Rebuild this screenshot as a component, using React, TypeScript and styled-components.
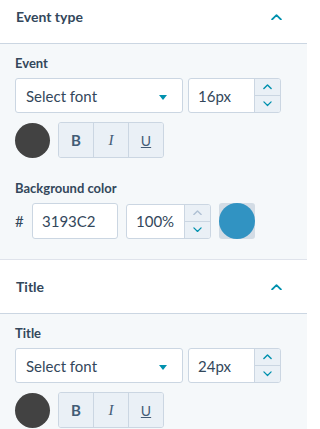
import React from "react";
import styled, { createGlobalStyle } from "styled-components";

const Global = createGlobalStyle`
  html, body { margin: 0; padding: 0; background: #ffffff; }
  body { font-family: Lato, "Open Sans", sans-serif; color: #33475b; }
`;

const Panel = styled.div`
  width: 307px;
  display: flex;
  flex-direction: column;
`;

const Header = styled.div<{ $h: number }>`
  box-sizing: border-box;
  height: ${(p) => p.$h}px;
  display: flex;
  align-items: flex-end;
  justify-content: space-between;
  padding: 0 25px 17px 16px;
  background: #fff;
  border-bottom: 1px solid #cbd6e2;
  font-size: 14px;
  font-weight: 700;
  line-height: 18px;
  color: #33475b;
`;

const HeaderIcon = styled.span`
  display: flex;
  align-items: center;
  height: 18px;
`;

const Body = styled.div`
  background: #f5f8fa;
  padding: 11px 15px 20px;
  display: flex;
  flex-direction: column;
  border-bottom: 1px solid #dfe3eb;
`;

const Label = styled.div<{ $top?: number }>`
  font-size: 13px;
  font-weight: 700;
  color: #33475b;
  margin-top: ${(p) => p.$top ?? 0}px;
  margin-bottom: 7px;
  line-height: 16px;
`;

const Row = styled.div<{ $gap?: number; $top?: number }>`
  display: flex;
  align-items: center;
  gap: ${(p) => p.$gap ?? 5}px;
  margin-top: ${(p) => p.$top ?? 0}px;
`;

const Select = styled.div`
  box-sizing: border-box;
  width: 168px;
  height: 35px;
  background: #fff;
  border: 1px solid #cbd6e2;
  border-radius: 3px;
  display: flex;
  align-items: center;
  justify-content: space-between;
  padding: 0 15px 0 10px;
  font-size: 15px;
  color: #33475b;
`;

const Caret = styled.span`
  width: 0;
  height: 0;
  border-left: 4.5px solid transparent;
  border-right: 4.5px solid transparent;
  border-top: 5px solid #0091ae;
  margin-top: 3px;
`;

const NumberBox = styled.div<{ $w: number }>`
  box-sizing: border-box;
  width: ${(p) => p.$w}px;
  height: 35px;
  display: flex;
  border: 1px solid #cbd6e2;
  border-radius: 3px;
  overflow: hidden;
  background: #fff;
`;

const NumberValue = styled.div`
  flex: 1;
  display: flex;
  align-items: center;
  padding-left: 9px;
  font-size: 15px;
  color: #33475b;
`;

const Stepper = styled.div`
  width: 25px;
  display: flex;
  flex-direction: column;
  background: #eaf0f6;
  border-left: 1px solid #cbd6e2;
`;

const Step = styled.div<{ $first?: boolean }>`
  flex: 1;
  display: flex;
  align-items: center;
  justify-content: center;
  border-bottom: ${(p) => (p.$first ? "1px solid #cbd6e2" : "none")};
`;

const Dot = styled.div<{ $color: string }>`
  width: 35px;
  height: 35px;
  border-radius: 50%;
  background: ${(p) => p.$color};
  flex: none;
`;

const BtnGroup = styled.div`
  display: flex;
  border: 1px solid #cbd6e2;
  border-radius: 3px;
  overflow: hidden;
  margin-left: 3px;
`;

const Btn = styled.div<{ $last?: boolean }>`
  width: 34px;
  height: 34px;
  display: flex;
  align-items: center;
  justify-content: center;
  background: #eaf0f6;
  border-right: ${(p) => (p.$last ? "none" : "1px solid #cbd6e2")};
  color: #425b76;
  font-size: 14px;
`;

const BoldTxt = styled.span`
  font-weight: 700;
  font-size: 15px;
`;
const ItalicTxt = styled.span`
  font-family: "Liberation Serif", serif;
  font-style: italic;
  font-size: 15px;
`;
const UnderTxt = styled.span`
  text-decoration: underline;
  font-size: 14px;
`;

const Hash = styled.span`
  font-size: 15px;
  color: #33475b;
  width: 12px;
`;

const TextInput = styled.div`
  box-sizing: border-box;
  width: 86px;
  height: 36px;
  background: #fff;
  border: 1px solid #cbd6e2;
  border-radius: 3px;
  display: flex;
  align-items: center;
  padding-left: 9px;
  font-size: 15px;
  color: #33475b;
  margin-left: 5px;
  margin-right: 8px;
`;

const Swatch = styled.div`
  width: 36px;
  height: 36px;
  background: #d3dce5;
  border-radius: 3px;
  display: flex;
  align-items: center;
  justify-content: center;
  margin-left: 8px;
`;

const SwatchDot = styled.div`
  width: 36px;
  height: 36px;
  border-radius: 50%;
  background: #3193c2;
`;

const Chevron = ({ up, color = "#0091ae", size = 10 }: { up?: boolean; color?: string; size?: number }) => (
  <svg width={size} height={size * 0.6} viewBox="0 0 10 6" fill="none">
    <path
      d={up ? "M1 5 L5 1 L9 5" : "M1 1 L5 5 L9 1"}
      stroke={color}
      strokeWidth={up ? 1.6 : 1.4}
      strokeLinecap="round"
      strokeLinejoin="round"
    />
  </svg>
);

const NumberField = ({ value, w, atMax }: { value: string; w: number; atMax?: boolean }) => (
  <NumberBox $w={w}>
    <NumberValue>{value}</NumberValue>
    <Stepper>
      <Step $first>
        <Chevron up size={9} color={atMax ? "#b0c1d4" : "#0091ae"} />
      </Step>
      <Step>
        <Chevron size={9} />
      </Step>
    </Stepper>
  </NumberBox>
);

const FontBlock = ({ label, size }: { label: string; size: string }) => (
  <>
    <Label>{label}</Label>
    <Row>
      <Select>
        <span>Select font</span>
        <Caret />
      </Select>
      <NumberField value={size} w={93} />
    </Row>
    <Row $gap={5} $top={9}>
      <Dot $color="#424242" />
      <BtnGroup>
        <Btn>
          <BoldTxt>B</BoldTxt>
        </Btn>
        <Btn>
          <ItalicTxt>I</ItalicTxt>
        </Btn>
        <Btn $last>
          <UnderTxt>U</UnderTxt>
        </Btn>
      </BtnGroup>
    </Row>
  </>
);

const SectionHeader = ({ title, h }: { title: string; h: number }) => (
  <Header $h={h}>
    <span>{title}</span>
    <HeaderIcon>
      <Chevron up size={11} />
    </HeaderIcon>
  </Header>
);

export default function App() {
  return (
    <Panel>
      <Global />
      <SectionHeader title="Event type" h={44} />
      <Body>
        <FontBlock label="Event" size="16px" />
        <Label $top={22}>Background color</Label>
        <Row $gap={0}>
          <Hash>#</Hash>
          <TextInput>3193C2</TextInput>
          <NumberField value="100%" w={85} atMax />
          <Swatch>
            <SwatchDot />
          </Swatch>
        </Row>
      </Body>
      <SectionHeader title="Title" h={54} />
      <Body>
        <FontBlock label="Title" size="24px" />
      </Body>
    </Panel>
  );
}
